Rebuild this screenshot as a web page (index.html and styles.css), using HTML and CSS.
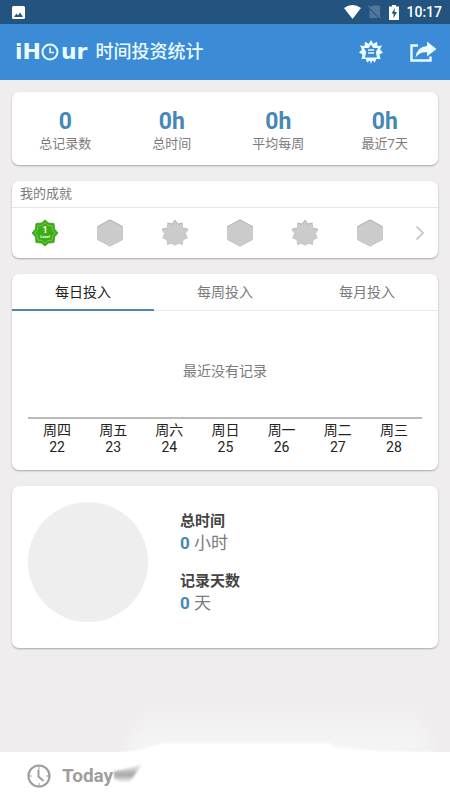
FILE: index.html
```html
<!DOCTYPE html>
<html lang="zh-CN">
<head>
<meta charset="utf-8">
<meta name="viewport" content="width=device-width, initial-scale=1">
<title>iHour 时间投资统计</title>
<link rel="stylesheet" href="styles.css">
</head>
<body>
<svg width="0" height="0" class="defs" aria-hidden="true">
  <defs>
    <symbol id="hex" viewBox="0 0 28 28">
      <path d="M14 .8 26.500 7.500v13L14 27 1.500 20.500v-13z" fill="#b5b5b5" stroke="#b5b5b5" stroke-linejoin="round"/>
      <path d="M14 2 26.500 8.500v12L14 27 1.500 20.500v-12z" fill="#cbcbcb" stroke="#cbcbcb" stroke-linejoin="round"/>
    </symbol>
    <symbol id="burst" viewBox="0 0 28 28">
      <path d="M14 .5 17 4.500 21.500 3.500 22 8.500 27.500 10 24.800 14.500 26.500 19 22.300 21 21.800 26 17.800 24.500 14 26.500 10.200 24.500 6.200 26 5.700 21 1.500 19 3.200 14.500 .5 10 6 8.500 6.500 3.500 11 4.500z" fill="#b5b5b5"/>
      <path d="M14 2 17 5.700 21.500 4.700 22 9.700 27 11 24.800 14.500 26.500 19 22.300 21 21.800 26 17.800 24.500 14 26.500 10.200 24.500 6.200 26 5.700 21 1.500 19 3.200 14.500 1 11 6 9.700 6.500 4.700 11 5.700z" fill="#cbcbcb"/>
    </symbol>
  </defs>
</svg>
<div class="status">
  <svg class="picture" width="13" height="13" viewBox="0 0 13 13"><rect width="13" height="13" rx="1.500" fill="#fff"/><path d="M2 11 4.500 7.500 6 9.500 8 6.500 11 11z" fill="#22547f"/></svg>
  <svg width="17" height="14" viewBox="0 0 17 14"><path d="M0 3Q8.500-3 17 3L8.500 14z" fill="#fff"/></svg>
  <svg class="sim" width="13" height="14" viewBox="0 0 13 14"><path d="M4.500.5H12v12.500H1.500V3.500z" fill="#527797"/><path d="M.5 1.500 12 13.500" stroke="#22547f" stroke-width="2"/><path d="M.5 .8 12.500 13.200" stroke="#7895ae"/></svg>
  <svg class="battery" width="10" height="15" viewBox="0 0 10 15"><path d="M3 0h4v1.500h3V15H0V1.500h3z" fill="#fff"/><path d="M6 3 2.500 8.500h2V13L8 7H5.500z" fill="#22547f"/></svg>
  <span class="time">10:17</span>
</div>
<header class="bar">
  <h1 class="title">
    <span class="logo">iH<svg width="18" height="18" viewBox="0 0 18 18" fill="none" stroke="#e9fbff"><circle cx="9" cy="9" r="7.500" stroke-width="2"/><path d="M9 4.500V9.500H13" stroke-width="1.600"/></svg>ur</span>
    <span>时间投资统计</span>
  </h1>
  <button class="icon-btn" aria-label="成就">
    <svg width="24" height="24" viewBox="0 0 24 24"><path d="M12 0 14.300 3.800 18 1.700 18.500 6 23 5.600 21 9.500 24 12.500 20.500 14.500 21.500 19 17.200 19 16 22.500 13.200 20.500 12 24 10.800 20.500 8 22.500 6.800 19 2.500 19 3.500 14.500 0 12.500 3 9.500 1 5.600 5.500 6 6 1.700 9.700 3.800z" fill="#e9fbff"/><path d="M12 4.500 14.200 8H19L16.800 12 18 17.500H6L7.200 12 5 8H9.800z" fill="#3b8bd6"/><path d="M9 10h6M9 13h6" stroke="#e9fbff" stroke-width="1.500"/></svg>
  </button>
  <button class="icon-btn" aria-label="分享">
    <svg width="28" height="22" viewBox="0 0 28 22"><path d="M9 4.500H2.500V19.500H21.500V15.500" fill="none" stroke="#e9fbff" stroke-width="2.400"/><path d="M18 .5 27.500 8 18 15.500V11.300Q11 10.500 6.500 16.500 8 5.500 18 5z" fill="#e9fbff"/></svg>
  </button>
</header>
<main class="content">
  <section class="card stats">
    <div><strong>0</strong><span>总记录数</span></div>
    <div><strong>0h</strong><span>总时间</span></div>
    <div><strong>0h</strong><span>平均每周</span></div>
    <div><strong>0h</strong><span>最近7天</span></div>
  </section>
  <section class="card">
    <h2 class="card-title">我的成就</h2>
    <div class="badges">
      <span><svg width="28" height="28" viewBox="0 0 28 28"><path d="M14 1 17.500 4 23 4.500 23.500 10 27 14 23.500 18 23 23.500 17.500 24 14 27 10.500 24 5 23.500 4.500 18 1 14 4.500 10 5 4.500 10.500 4z" fill="#3fa91b" stroke="#47a926" stroke-linejoin="round"/><path d="M14 3.800 17 6.500 21.200 6.800 21.500 11 24.200 14 21.500 17 21.200 21.200 17 21.500 14 24.200 11 21.500 6.800 21.200 6.500 17 3.800 14 6.500 11 6.800 6.800 11 6.500z" fill="#3cae13" stroke="#80cf60" stroke-width=".8"/><text x="14" y="14" class="badge-number">1</text><text x="14" y="19" class="badge-word">Level</text></svg></span>
      <span><svg width="28" height="28"><use href="#hex"/></svg></span>
      <span><svg width="28" height="28"><use href="#burst"/></svg></span>
      <span><svg width="28" height="28"><use href="#hex"/></svg></span>
      <span><svg width="28" height="28"><use href="#burst"/></svg></span>
      <span><svg width="28" height="28"><use href="#hex"/></svg></span>
      <button class="more" aria-label="更多成就"><svg width="10" height="16" viewBox="0 0 10 16"><path d="M1.500 1.500 8 8 1.500 14.500" fill="none" stroke="#cdcdcd" stroke-width="2"/></svg></button>
    </div>
  </section>
  <section class="card">
    <div class="tabs">
      <button class="tab active">每日投入</button>
      <button class="tab">每周投入</button>
      <button class="tab">每月投入</button>
    </div>
    <div class="chart">
      <p class="empty">最近没有记录</p>
      <ol class="days">
        <li>周四<br>22</li>
        <li>周五<br>23</li>
        <li>周六<br>24</li>
        <li>周日<br>25</li>
        <li>周一<br>26</li>
        <li>周二<br>27</li>
        <li>周三<br>28</li>
      </ol>
    </div>
  </section>
  <section class="card summary">
    <div class="pie"></div>
    <dl class="totals">
      <dt>总时间</dt><dd><b>0</b> 小时</dd>
      <dt>记录天数</dt><dd><b>0</b> 天</dd>
    </dl>
  </section>
</main>
<footer class="footer">
  <a class="today" href="#today">
    <svg width="24" height="24" viewBox="0 0 24 24" fill="none" stroke="#9f9e9d"><circle cx="12" cy="12" r="10.500" stroke-width="2.200"/><path d="M12 2v3M12 19v3M2 12h3M19 12h3" stroke-width="1"/><path d="M11.500 5.500V12.500L16.500 17" stroke-width="2"/></svg>
    <span>Today</span>
  </a>
  <svg class="haze" viewBox="0 0 338 108" preserveAspectRatio="none" aria-hidden="true">
    <defs>
      <linearGradient id="rise" x1="0" y1="0" x2="0" y2="1"><stop offset="0" stop-color="#fff" stop-opacity="0"/><stop offset="1" stop-color="#fff" stop-opacity=".55"/></linearGradient>
      <linearGradient id="smear" x1="0" y1="0" x2="0" y2="1"><stop offset="0" stop-color="#fff"/><stop offset=".6" stop-color="#a4a4a3"/><stop offset="1" stop-color="#fff"/></linearGradient>
      <filter id="soft"><feGaussianBlur stdDeviation="7"/></filter>
      <filter id="edge"><feGaussianBlur stdDeviation="1"/></filter>
    </defs>
    <path d="M36 8H304L318 60H14z" fill="url(#rise)" filter="url(#soft)"/>
    <path d="M4 61Q30 58 50 51H216L222 55Q270 60 318 60V70H4z" fill="#fff" filter="url(#edge)"/>
    <path d="M1 79Q18 77 30 71L16 91Q8 91 1 87z" fill="url(#smear)" filter="url(#edge)"/>
  </svg>
</footer>
</body>
</html>
```
FILE: styles.css
```css
* { box-sizing: border-box; }

body {
  margin: 0;
  min-height: 100vh;
  display: flex;
  flex-direction: column;
  background: #efedee;
  color: #7b7b7b;
  font: 14px/18px Roboto, "Noto Sans CJK SC", sans-serif;
}

h1, h2, p, ol, dl, dd { margin: 0; padding: 0; }
button { border: 0; padding: 0; background: none; font: inherit; color: inherit; }
svg { display: block; }
.defs { position: absolute; }

.status {
  height: 24px;
  display: flex;
  align-items: center;
  padding: 0 8px 0 12px;
  background: #22547f;
  color: #fff;
}
.picture { margin-right: auto; }
.sim { margin-left: 7px; }
.battery { margin-left: 8px; }
.time { margin-left: 7px; font-size: 14px; font-weight: 500; }

.bar {
  height: 56px;
  display: flex;
  align-items: center;
  gap: 26px;
  padding: 0 13px 0 15px;
  background: #3b8bd6;
  color: #e9fbff;
}
.title {
  display: flex;
  align-items: center;
  gap: 8px;
  margin-right: auto;
  font-size: 18px;
  font-weight: 500;
  line-height: 28px;
}
.logo {
  display: flex;
  align-items: center;
  font-family: "DejaVu Sans", sans-serif;
  font-size: 22px;
  font-weight: 700;
}
.logo svg { margin-right: 2px; }

.content {
  flex: 1;
  display: flex;
  flex-direction: column;
  gap: 16px;
  padding: 12px 12px 16px;
}
.card {
  background: #fff;
  border-radius: 7px;
  box-shadow: 0 1px 2px #0000004d;
}

.stats {
  display: grid;
  grid-template-columns: repeat(4, 1fr);
  padding: 16px 0 12px;
  text-align: center;
}
.stats strong, .stats span { display: block; }
.stats strong { font-size: 23px; line-height: 27px; color: #4588b6; }
.stats span { font-size: 13px; line-height: 18px; }

.card-title {
  padding: 4px 8px;
  border-bottom: 1px solid #e6e6e6;
  font-size: 13px;
  font-weight: 400;
}
.badges {
  display: grid;
  grid-template-columns: repeat(6, 1fr) 36px;
  align-items: center;
  justify-items: center;
  height: 50px;
}
.badge-number { font: 700 9px Roboto, sans-serif; text-anchor: middle; fill: #fff; }
.badge-word { font: 700 4px Roboto, sans-serif; text-anchor: middle; fill: #fff; }

.tabs { display: grid; grid-template-columns: repeat(3, 1fr); }
.tab { height: 37px; border-bottom: 1px solid #e9e9e9; }
.tab.active { border-bottom: 2px solid #5288ae; color: #222; }

.chart { padding: 0 16px 14px; }
.empty { padding: 51px 0 37px; text-align: center; }
.days {
  display: grid;
  grid-template-columns: repeat(7, 1fr);
  padding: 3px 0 0 1px;
  border-top: 2px solid #bbb;
  list-style: none;
  color: #222;
  line-height: 17px;
  text-align: center;
}

.summary {
  display: flex;
  gap: 32px;
  padding: 16px 16px 26px;
}
.pie { width: 120px; height: 120px; border-radius: 50%; background: #eee; }
.totals { padding-top: 8px; font-size: 17px; line-height: 22px; }
.totals dt { font-size: 15px; font-weight: 700; color: #444; }
.totals dd { margin-bottom: 16px; }
.totals dd:last-child { margin-bottom: 0; }
.totals b { font-weight: 700; color: #4588b6; }

.footer {
  position: relative;
  height: 48px;
  padding: 0 27px;
  display: flex;
  align-items: center;
  background: #fff;
}
.today {
  display: flex;
  align-items: center;
  gap: 11px;
  color: #9f9e9d;
  font-size: 19px;
  font-weight: 700;
  text-decoration: none;
}
.haze {
  position: absolute;
  right: 0;
  bottom: 0;
  width: 75%;
  height: 108px;
  pointer-events: none;
}
```
